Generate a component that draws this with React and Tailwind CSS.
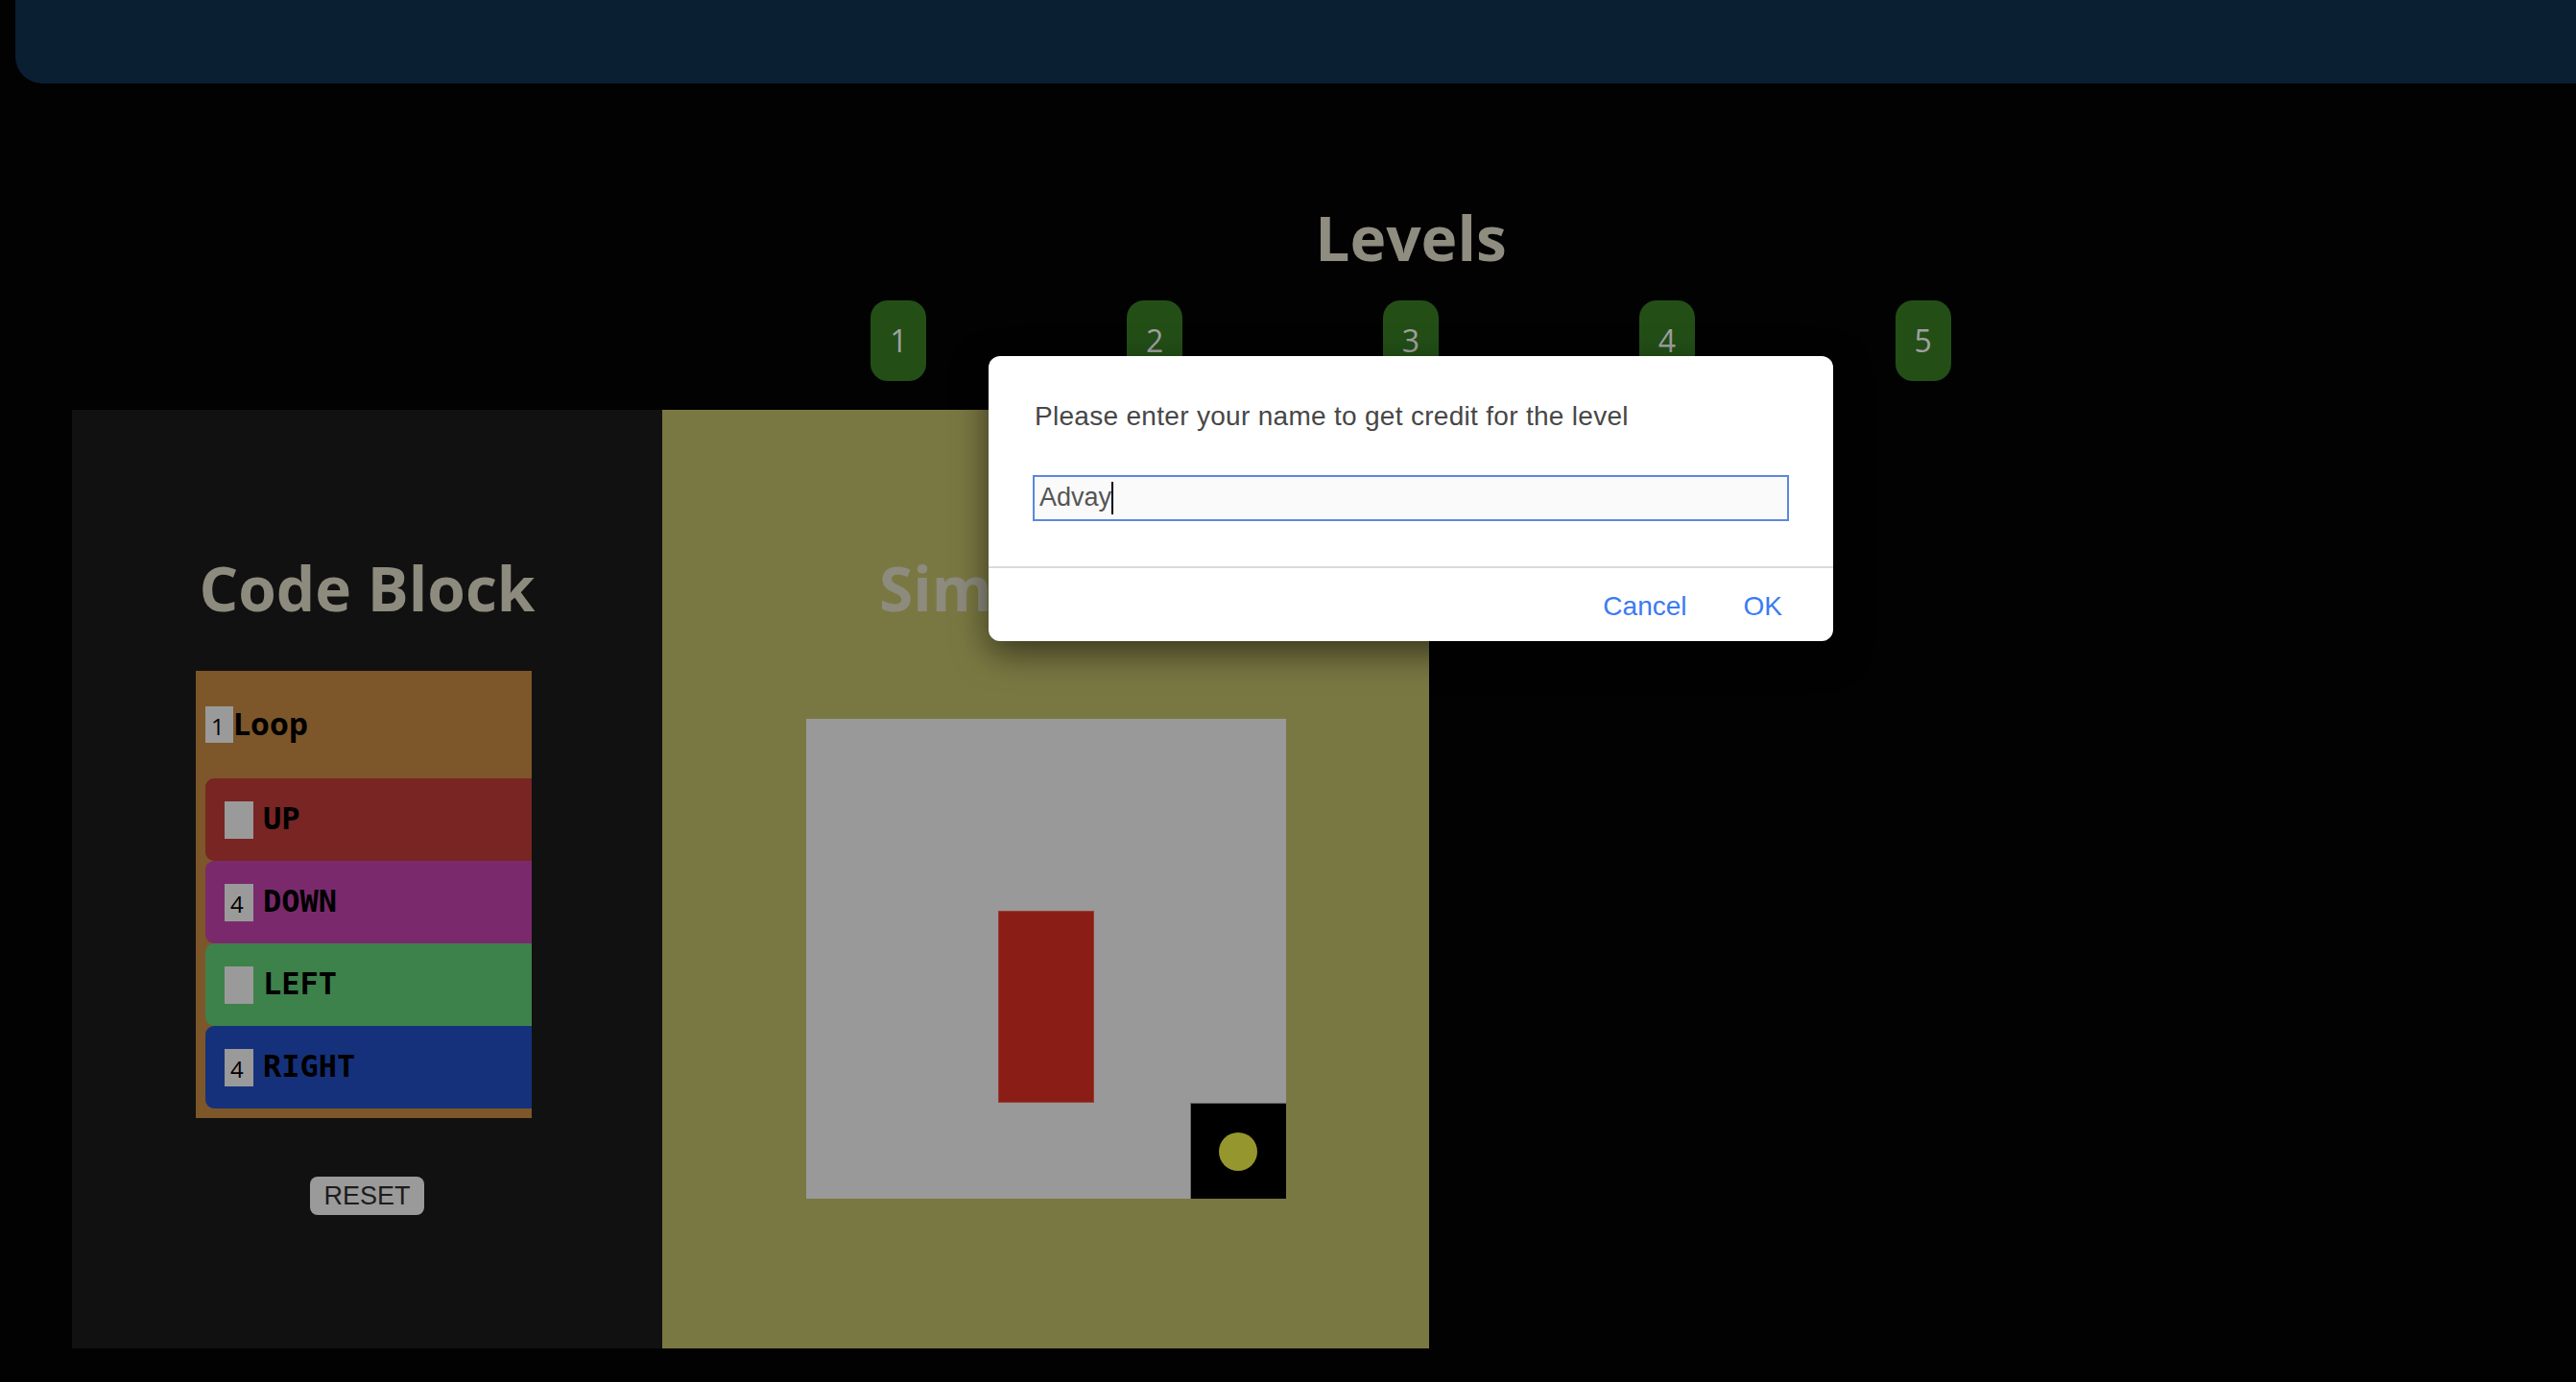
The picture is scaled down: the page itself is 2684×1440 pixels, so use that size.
const heading = "font-['Open_Sans',sans-serif] font-bold text-[64px] leading-none text-[#8d8b7e]";

const commands = [
  { label: 'UP', count: '', bg: 'bg-[#782524]' },
  { label: 'DOWN', count: '4', bg: 'bg-[#7a2a6c]' },
  { label: 'LEFT', count: '', bg: 'bg-[#3d824b]' },
  { label: 'RIGHT', count: '4', bg: 'bg-[#16317c]' },
];

function CountBox({ value, w = 'w-[30px]', h = 'h-[39px]' }) {
  return (
    <div className={`${w} ${h} bg-[#9a9a9a] flex items-center pl-[6px] pt-[3px] font-['Open_Sans',sans-serif] text-[24px] leading-none text-black shrink-0`}>
      {value}
    </div>
  );
}

function CodeBlock() {
  return (
    <div className="w-[615px] h-[978px] bg-[#111111] flex flex-col pt-[154px]">
      <h2 className={heading + ' text-center'}>Code Block</h2>
      <div className="ml-[129px] mt-[54px] w-[350px] bg-[#7d5729] pb-[10px] pl-[10px]">
        <div className="h-[112px] flex items-center">
          <CountBox value="1" w="w-[29px]" h="h-[38px]" />
          <span className="font-['Open_Sans',sans-serif] font-bold text-[32px] leading-none text-black -mt-[2px]">Loop</span>
        </div>
        {commands.map((c) => (
          <div key={c.label} className={`h-[86px] rounded-l-[9px] ${c.bg} flex items-center pl-[20px] gap-[10px]`}>
            <CountBox value={c.count} />
            <span className="font-['DejaVu_Sans_Mono',monospace] font-bold text-[32px] leading-none text-black -mt-[2px]">{c.label}</span>
          </div>
        ))}
      </div>
      <button className="self-center mt-[61px] w-[119px] h-[40px] rounded-[8px] bg-[#9a9a9a] font-['Liberation_Sans',Arial,sans-serif] text-[27px] leading-none text-[#1c1c1c]">
        RESET
      </button>
    </div>
  );
}

function Simulation() {
  return (
    <div className="w-[799px] h-[978px] bg-[#7a7842] flex flex-col items-center pt-[154px]">
      <h2 className={heading}>Simulation</h2>
      <div className="mt-[104px] w-[500px] h-[500px] bg-[#999999] grid grid-cols-5 grid-rows-5">
        <div className="col-start-3 row-start-3 row-span-2 bg-[#8a1e16] border border-[#9b3b33]" />
        <div className="col-start-5 row-start-5 bg-black border-l border-t border-[#6a6a6a] flex items-center justify-center">
          <div className="w-[40px] h-[40px] rounded-full bg-[#96962e]" />
        </div>
      </div>
    </div>
  );
}

function PromptDialog() {
  return (
    <div className="absolute left-[1030px] top-[371px] w-[880px] h-[297px] bg-white rounded-[12px] shadow-[0_12px_36px_rgba(0,0,0,0.55)] font-['Liberation_Sans',Arial,sans-serif] flex flex-col">
      <p className="pt-[49px] pl-[48px] text-[28px] leading-none tracking-[0.3px] text-[#474747]">
        Please enter your name to get credit for the level
      </p>
      <div className="mt-[47px] ml-[46px] w-[788px] h-[48px] border-2 border-[#5b88da] bg-[#fafafa] flex items-center pl-[5px]">
        <span className="text-[27px] leading-none text-[#555555] -mt-[2px]">Advay</span>
        <span className="w-[2px] h-[34px] bg-black" />
      </div>
      <div className="mt-[47px] h-[2px] bg-[#dadada]" />
      <div className="mt-[26px] flex justify-end gap-[59px] pr-[53px] text-[28px] leading-none text-[#3b7bf3]">
        <button>Cancel</button>
        <button>OK</button>
      </div>
    </div>
  );
}

export default function App() {
  return (
    <div className="relative min-h-screen bg-[#020202] overflow-hidden">
      <div className="ml-[16px] h-[87px] bg-[#0b1f33] rounded-bl-[28px]" />

      <div className="ml-[803px] w-[1334px]">
        <h1 className={heading + ' text-center mt-[129px] text-[#8f8c80]'}>Levels</h1>
        <div className="mt-[33px] grid grid-cols-5 justify-items-center">
          {[1, 2, 3, 4, 5].map((n) => (
            <button
              key={n}
              className="w-[58px] h-[84px] rounded-[18px] bg-[#234f17] flex items-center justify-center font-['Open_Sans',sans-serif] text-[32px] leading-none text-[#a0a0a0]"
            >
              {n}
            </button>
          ))}
        </div>
      </div>

      <div className="mt-[30px] ml-[75px] flex">
        <CodeBlock />
        <Simulation />
      </div>

      <PromptDialog />
    </div>
  );
}
